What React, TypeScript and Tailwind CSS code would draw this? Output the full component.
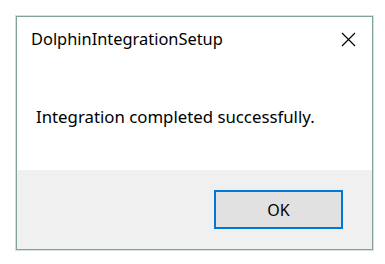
export default function App() {
  return (
    <div className="w-[385px] h-[264px] bg-white pt-[16px] pl-[16px]" style={{ fontFamily: '"Noto Sans", "Open Sans", sans-serif' }}>
      <div className="w-[357px] h-[234px] border border-[#83a39a] flex flex-col bg-white shadow-[0_0_0_1px_#d3e0dc]">
        <div className="h-[44px] flex items-center justify-between pl-[14px] pr-[16px]">
          <span className="text-[16.4px] text-black">DolphinIntegrationSetup</span>
          <svg width="15" height="15" viewBox="0 0 15 15" className="text-black">
            <path d="M1 1 L14 14 M14 1 L1 14" stroke="currentColor" strokeWidth="1.2" />
          </svg>
        </div>
        <div className="flex-1 pl-[19px] pt-[45px]">
          <p className="text-[16.8px] leading-[22px] text-black">Integration completed successfully.</p>
        </div>
        <div className="h-[79px] bg-[#f0f0f0] flex items-start justify-end pt-[20px] pr-[29px]">
          <button className="w-[129px] h-[39px] border-2 border-[#0078d7] bg-[#e1e1e1] text-[16px] text-black">
            OK
          </button>
        </div>
      </div>
    </div>
  );
}
